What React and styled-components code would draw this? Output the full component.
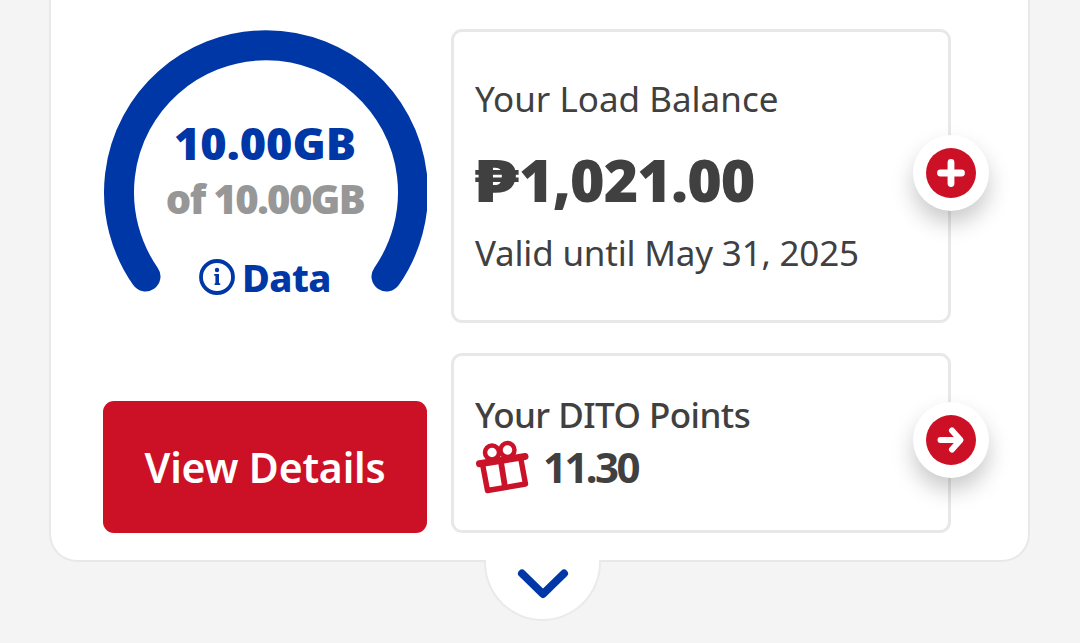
import React from "react";
import styled, { createGlobalStyle } from "styled-components";

const GlobalStyle = createGlobalStyle`
  * { box-sizing: border-box; }
  body {
    margin: 0;
    background: #f4f4f4;
    color: #404041;
    font-family: "Noto Sans", "Open Sans", sans-serif;
    overflow: hidden;
  }
`;

const Page = styled.main`
  width: 1080px;
  height: 643px;
  padding: 0 50px 0 49px;
  background: #f4f4f4;
  overflow: hidden;
`;

const Card = styled.section`
  position: relative;
  display: flex;
  gap: 24px;
  height: 562px;
  padding: 29px 0 0 52px;
  background: #fff;
  border: solid #e8e8e8;
  border-width: 0 2px 2px;
  border-radius: 0 0 28px 28px;
`;

const UsageColumn = styled.div`
  display: flex;
  flex-direction: column;
  justify-content: space-between;
  width: 324px;
  height: 504px;
`;

const AccountColumn = styled.div`
  display: flex;
  flex-direction: column;
  gap: 30px;
  width: 500px;
`;

const Gauge = styled.div`
  display: grid;
  width: 324px;
  height: 264px;
  > * { grid-area: 1 / 1; }
`;

const GaugeLabels = styled.div`
  display: flex;
  flex-direction: column;
  align-items: center;
  padding-top: 84px;
`;

const Label = styled.div`
  font-size: ${(p) => p.$size}px;
  font-weight: ${(p) => p.$weight || 400};
  line-height: ${(p) => p.$line}px;
  letter-spacing: ${(p) => p.$tracking || 0}px;
  color: ${(p) => p.$color || "inherit"};
  white-space: nowrap;
`;

const Amount = styled(Label)`
  display: flex;
  margin-top: 16px;
`;

const Peso = styled.span`
  display: block;
  width: 44px;
  transform: scaleX(1.3);
  transform-origin: 0 50%;
`;

const Validity = styled(Label)`
  margin-top: 3px;
`;

const DataRow = styled.div`
  display: flex;
  align-items: center;
  gap: 7px;
  margin-top: 23px;
  svg { display: block; }
`;

const DetailsButton = styled.button`
  height: 132px;
  padding: 0;
  border: 0;
  border-radius: 11px;
  background: #cc1126;
  color: #fff;
  font-family: inherit;
`;

const Panel = styled.div`
  position: relative;
  display: flex;
  flex-direction: column;
  height: ${(p) => p.$height}px;
  padding: ${(p) => p.$top}px 0 0 21px;
  border: 3px solid #e8e8e8;
  border-radius: 11px;
`;

const RoundButton = styled.button`
  position: absolute;
  top: ${(p) => p.$top}px;
  right: -41px;
  display: grid;
  place-items: center;
  width: 76px;
  height: 76px;
  padding: 0;
  border: 0;
  border-radius: 50%;
  background: #fff;
  box-shadow: 0 12px 22px rgba(0, 0, 0, 0.21);
`;

const PointsRow = styled.div`
  display: flex;
  align-items: center;
  gap: 14px;
`;

const ExpandTab = styled.button`
  position: absolute;
  left: 433px;
  top: 560px;
  display: flex;
  justify-content: center;
  width: 117px;
  height: 61px;
  padding: 6px 0 0;
  border: solid #eaeaea;
  border-width: 0 2px 2px;
  border-radius: 0 0 59px 59px;
  background: #fff;
  &::before {
    content: "";
    position: absolute;
    left: 0;
    right: 0;
    top: -4px;
    height: 6px;
    background: #fff;
  }
  svg { position: relative; }
`;

const InfoIcon = () => (
  <svg width="36" height="36" viewBox="0 0 36 36">
    <circle cx="18" cy="18" r="16" fill="none" stroke="#0037a6" strokeWidth="3.8" />
    <circle cx="18" cy="11" r="2.2" fill="#0037a6" />
    <path d="M15.2 15h4.8v9.3h1.2v1.7h-5.6v-1.7h.8v-7.5h-1.2z" fill="#0037a6" />
  </svg>
);

const GiftIcon = () => (
  <svg width="54" height="54" viewBox="0 0 54 54" fill="none" stroke="#ca1229" strokeLinecap="round" strokeLinejoin="round">
    <circle cx="17" cy="12.5" r="7" strokeWidth="4.5" />
    <circle cx="32.5" cy="10" r="7" strokeWidth="4.5" />
    <path d="M4.5 23.7L50 16.5" strokeWidth="7" />
    <path d="M7.5 24L12.5 50.5L50.5 44L45.5 17" strokeWidth="5.4" />
    <path d="M25.5 19L30 47" strokeWidth="5.8" strokeLinecap="butt" />
  </svg>
);

export default function App() {
  return (
    <>
      <GlobalStyle />
      <Page>
        <Card>
          <UsageColumn>
            <Gauge>
              <svg width="324" height="264" viewBox="0 0 324 264">
                <path d="M42.5 247.5A147 147 0 1 1 283.5 247.5" fill="none" stroke="#0037a6" strokeWidth="30" strokeLinecap="round" />
              </svg>
              <GaugeLabels>
                <Label $size={45} $weight={900} $line={60} $color="#0037a6">10.00GB</Label>
                <Label $size={40} $weight={900} $line={52} $tracking={-1.6} $color="#979797">of 10.00GB</Label>
                <DataRow>
                  <InfoIcon />
                  <Label $size={38} $weight={800} $line={58} $tracking={-0.6} $color="#0037a6">Data</Label>
                </DataRow>
              </GaugeLabels>
            </Gauge>
            <DetailsButton>
              <Label $size={41} $weight={600} $line={56} $tracking={-0.2}>View Details</Label>
            </DetailsButton>
          </UsageColumn>
          <AccountColumn>
            <Panel $height={294} $top={43}>
              <Label $size={35} $line={48}>Your Load Balance</Label>
              <Amount $size={59} $weight={900} $line={80} $tracking={-0.9}>
                <Peso>₱</Peso>
                <span>1,021.00</span>
              </Amount>
              <Validity $size={35} $line={62} $tracking={-0.2}>Valid until May 31, 2025</Validity>
              <RoundButton $top={103} aria-label="Add load">
                <svg width="50" height="50" viewBox="0 0 50 50">
                  <circle cx="25" cy="25" r="25" fill="#cc1126" />
                  <path d="M25 14.5v21M14.5 25h21" stroke="#fff" strokeWidth="6.8" strokeLinecap="round" />
                </svg>
              </RoundButton>
            </Panel>
            <Panel $height={180} $top={35}>
              <Label $size={35} $weight={500} $line={48} $tracking={-0.55}>Your DITO Points</Label>
              <PointsRow>
                <GiftIcon />
                <Label $size={42} $weight={700} $line={56} $tracking={-2.6}>11.30</Label>
              </PointsRow>
              <RoundButton $top={46} aria-label="Open points">
                <svg width="50" height="50" viewBox="0 0 50 50">
                  <circle cx="25" cy="25" r="25" fill="#cc1126" />
                  <path d="M14.5 25H34M26 15.5L34.5 25L26 34.5" fill="none" stroke="#fff" strokeWidth="6" strokeLinecap="round" strokeLinejoin="round" />
                </svg>
              </RoundButton>
            </Panel>
          </AccountColumn>
          <ExpandTab aria-label="Expand">
            <svg width="54" height="36" viewBox="0 0 54 36">
              <path d="M6 7.5L27 28L48 7.5" fill="none" stroke="#0037a6" strokeWidth="8" strokeLinecap="round" strokeLinejoin="round" />
            </svg>
          </ExpandTab>
        </Card>
      </Page>
    </>
  );
}
